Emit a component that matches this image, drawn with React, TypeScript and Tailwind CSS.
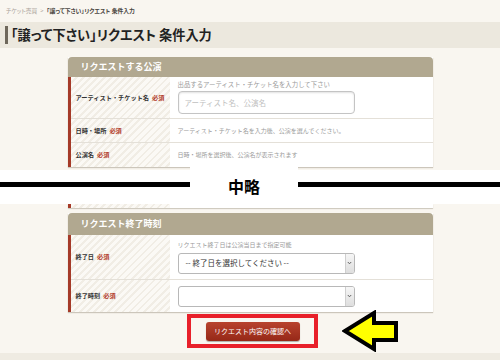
import type { ReactNode } from 'react'

const labelStripe =
  'bg-[repeating-linear-gradient(135deg,#fbf9f5_0px,#fbf9f5_3px,#f1ede5_3px,#f1ede5_5px)]'

function Required() {
  return <span className="ml-[3px] text-[#b3402c]">必須</span>
}

function Row({ label, height, children, last }: { label: string; height: string; children: ReactNode; last?: boolean }) {
  return (
    <div className={`flex ${height} ${last ? '' : 'border-b border-[#e4e0d8]'}`}>
      <div className={`flex w-[99px] items-center pl-[5px] text-[6.2px] font-bold text-[#333] ${labelStripe}`}>
        {label}
        <Required />
      </div>
      <div className="flex flex-1 flex-col justify-center pl-[8px]">{children}</div>
    </div>
  )
}

function Hint({ children }: { children: ReactNode }) {
  return <p className="text-[6px] leading-[8px] text-[#9a9a9a]">{children}</p>
}

function SelectBox({ text }: { text?: string }) {
  return (
    <div className="flex h-[21px] w-[177px] overflow-hidden rounded-[3px] border border-[#b8b8b8] bg-white">
      <div className="flex flex-1 items-center pl-[7px] text-[7.5px] text-[#333]">{text}</div>
      <div className="flex w-[9px] items-center justify-center border-l border-[#cfcfcf] bg-gradient-to-b from-[#f6f6f6] to-[#dedede]">
        <svg width="5" height="4" viewBox="0 0 5 4">
          <path d="M0.8 1 L2.5 2.8 L4.2 1" fill="none" stroke="#555" strokeWidth="0.9" />
        </svg>
      </div>
    </div>
  )
}

function CardHeader({ title, height }: { title: string; height: string }) {
  return (
    <div className={`flex ${height} items-center rounded-t-[4px] bg-[#b1a890] pl-[13px] text-[9px] font-bold text-white`}>
      {title}
    </div>
  )
}

export default function App() {
  return (
    <div className="h-[360px] w-[500px] overflow-hidden bg-[#f9f6f0] [font-family:'Noto_Sans_CJK_JP',sans-serif]">
      {/* Breadcrumb */}
      <div className="flex h-[22px] items-center pl-[6px] text-[5.8px] text-[#aaa29a] [font-feature-settings:'palt']">
        <span>チケット売買</span>
        <span className="mx-[3px]">&gt;</span>
        <span className="font-bold text-[#4a4540]">「譲って下さい」リクエスト 条件入力</span>
      </div>

      {/* Title */}
      <div className="flex h-[26px] items-center bg-[#ece8de] pl-[5px]">
        <div className="h-[18px] w-[3px] bg-[#6e675b]" />
        <h1 className="ml-[3px] text-[13.2px] font-bold text-[#222] [font-feature-settings:'palt']">
          「譲って下さい」リクエスト 条件入力
        </h1>
      </div>

      {/* Card 1 */}
      <div className="mx-auto mt-[9px] w-[365px] bg-white shadow-[0_1px_1px_rgba(120,110,90,0.35)]">
        <CardHeader title="リクエストする公演" height="h-[20px]" />
        <div className="border-l-[3px] border-[#a53a28]">
          <Row label="アーティスト・チケット名" height="h-[42px]">
            <p className="text-[6.4px] leading-[8px] text-[#9a9a9a]">出品するアーティスト・チケット名を入力して下さい</p>
            <input
              readOnly
              placeholder="アーティスト名、公演名"
              className="mt-[2px] h-[23px] w-[177px] rounded-[4px] border border-[#c4c4c4] bg-white pl-[6px] text-[7.5px] shadow-[inset_0_1px_2px_rgba(0,0,0,0.12)] outline-none placeholder:text-[#c0c0c0]"
            />
          </Row>
          <Row label="日時・場所" height="h-[24px]">
            <Hint>アーティスト・チケット名を入力後、公演を選んでください。</Hint>
          </Row>
          <Row label="公演名" height="h-[24px]" last>
            <Hint>日時・場所を選択後、公演名が表示されます</Hint>
          </Row>
        </div>
      </div>

      {/* Omitted band */}
      <div className="mt-[3px] flex h-[34px] bg-white">
        <div className="mt-[12px] h-[5px] w-[190px] bg-black" />
        <div className="-mt-[3px] flex w-[108px] items-center justify-center bg-white text-[16px] font-bold text-black">
          中略
        </div>
        <div className="mt-[12px] h-[5px] flex-1 bg-black" />
      </div>

      {/* Tail of omitted card */}
      <div className="mx-auto flex h-[4px] w-[365px] border-l-[3px] border-[#a53a28] bg-white shadow-[0_1px_1px_rgba(120,110,90,0.35)]">
        <div className={`w-[99px] ${labelStripe}`} />
      </div>

      {/* Card 2 */}
      <div className="mx-auto mt-[5px] w-[365px] bg-white shadow-[0_1px_1px_rgba(120,110,90,0.35)]">
        <CardHeader title="リクエスト終了時刻" height="h-[22px]" />
        <div className="border-l-[3px] border-[#a53a28]">
          <Row label="終了日" height="h-[45px]">
            <Hint>リクエスト終了日は公演当日まで指定可能</Hint>
            <div className="mt-[4px]">
              <SelectBox text="-- 終了日を選択してください --" />
            </div>
          </Row>
          <Row label="終了時刻" height="h-[32px]" last>
            <SelectBox />
          </Row>
        </div>
      </div>

      {/* Submit */}
      <div className="relative flex h-[41px] justify-center pl-[5px] pt-[2px]">
        <div className="flex h-[34px] w-[131px] items-center justify-center border-[4px] border-[#e8202a]">
          <button className="h-[19px] w-[94px] rounded-[3px] bg-gradient-to-b from-[#b8432e] to-[#962817] text-[7px] text-white shadow-[0_1px_1px_rgba(0,0,0,0.3)]">
            リクエスト内容の確認へ
          </button>
        </div>
        <svg className="absolute left-[342px] top-[-2px]" width="57" height="42" viewBox="0 0 57 42">
          <polygon
            points="3,21 32,3 32,13 54,13 54,30 32,30 32,39"
            fill="#ffff00"
            stroke="#000"
            strokeWidth="4"
            strokeLinejoin="miter"
          />
        </svg>
      </div>

      {/* Footer */}
      <div className="h-[7px] bg-[#efebe2]" />
    </div>
  )
}
